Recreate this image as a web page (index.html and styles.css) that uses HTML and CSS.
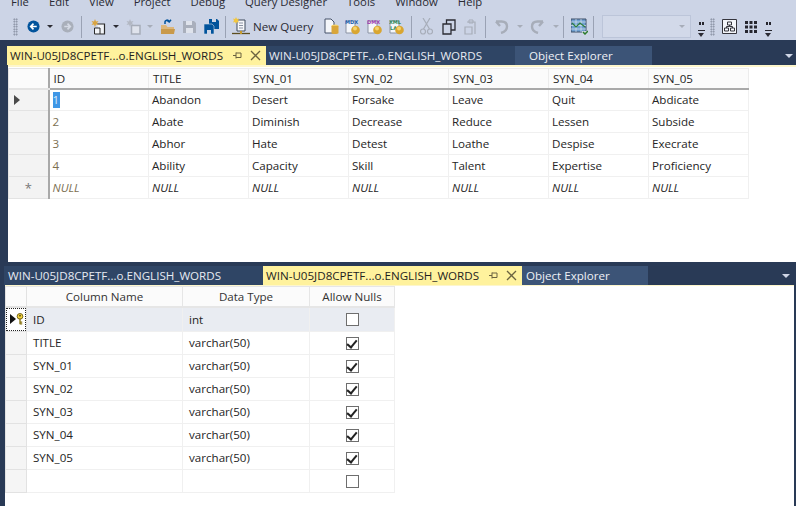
FILE: index.html
```html
<!DOCTYPE html>
<html lang="en">
<head>
<meta charset="utf-8">
<title>SSMS</title>
<link rel="stylesheet" href="styles.css">
</head>
<body>
<div class="app">
  <nav class="menu">
    <span class="mi m-file">File</span><span class="mi">Edit</span><span class="mi">View</span><span class="mi">Project</span><span class="mi">Debug</span><span class="mi">Query Designer</span><span class="mi">Tools</span><span class="mi">Window</span><span class="mi">Help</span>
  </nav>
  <div class="toolbar">
    <i class="grip g-a"></i>
    <svg class="i i-back" width="13" height="13" viewBox="0 0 14 14"><circle cx="7" cy="7" r="6.5" fill="#00539c"/><path d="M10.5 7H4.5M7 4L4 7l3 3" stroke="#fff" stroke-width="1.8" fill="none"/></svg>
    <i class="caret c-1"></i>
    <svg class="i i-fwd" width="13" height="13" viewBox="0 0 14 14"><circle cx="7" cy="7" r="6.5" fill="#a9afba"/><path d="M3.5 7H9.5M7 4l3 3-3 3" stroke="#d5dae5" stroke-width="1.8" fill="none"/></svg>
    <i class="sep s-1"></i>
    <svg class="i i-newp" width="15" height="16" viewBox="0 0 15 16"><path d="M6 5h7.500v10H9" fill="#f2f4f8" stroke="#2b2b2b" stroke-width="1.200"/><path d="M3.500 9v6H9V9z" fill="#f2f4f8" stroke="#2b2b2b"/><path d="M4 0l1 2.500L7.500 2 6 4l1.500 2L5 5.500 4 8 3 5.500.5 6 2 4 .5 2 3 2.500z" fill="#d9a441"/></svg>
    <i class="caret c-2"></i>
    <svg class="i i-add" width="15" height="16" viewBox="0 0 15 16"><path d="M5.500 6.500H14V15H5.500z" fill="#dfe3ec" stroke="#a7adb9" stroke-width="1.500"/><path d="M4 0l1 2.500L7.500 2 6 4l1.500 2L5 5.500 4 8 3 5.500.5 6 2 4 .5 2 3 2.500z" fill="#b3b8c3"/></svg>
    <i class="caret caret-off c-3"></i>
    <svg class="i i-open" width="15" height="16" viewBox="0 0 15 16"><path d="M1 6h5l1.500 2H14v7H1z" fill="#dcb67a"/><path d="M1 10h14l-1 5H1z" fill="#c99a4b"/><path d="M5 5V3.500A2 2 0 0 1 9 2.800M7 1.500l2.200 1.500L11 .800" stroke="#00539c" stroke-width="1.500" fill="none"/></svg>
    <svg class="i i-save" width="13" height="14" viewBox="0 0 13 14"><path d="M0 1h11l2 2v10H0z" fill="#a9afbc"/><path d="M3 1h6v4H3zM3 8h7v5H3z" fill="#dfe3ec"/></svg>
    <svg class="i i-saveall" width="15" height="15" viewBox="0 0 15 15"><path d="M5 0h8l2 2v8H5z" fill="#00539c"/><path d="M8 0h4v3H8z" fill="#cfd6e6"/><path d="M0 5h8l2 2v8H0z" fill="#00539c" stroke="#cfd6e6" stroke-width=".6"/><path d="M3 11h4v4H3z" fill="#cfd6e6"/></svg>
    <i class="sep s-2"></i>
    <svg class="i i-query" width="18" height="19" viewBox="0 0 18 19"><path d="M5 3h8v11H5z" fill="#f6f7fa" stroke="#3f4a5c"/><path d="M7 6h4M7 8.500h4M7 11h4" stroke="#8b93a3"/><path d="M4 0l1 2 2-.5L6 3.500l1 2-2-.5-1 2-1-2-2 .5 1-2-1-2 2 .5z" fill="#f2c63f"/><path d="M0 16.500h18" stroke="#5c4e1f" stroke-width="1.300"/><path d="M9 14v3" stroke="#c79b2d" stroke-width="2"/></svg>
    <span class="nq">New Query</span>
    <svg class="i i-db1" width="15" height="17" viewBox="0 0 15 17"><path d="M1 1h6l3 3v11H1z" fill="#f4f6fa" stroke="#47536a"/><ellipse cx="11" cy="8" rx="3.500" ry="1.500" fill="#f3cd62"/><path d="M7.500 8v7c0 1.400 7 1.400 7 0V8z" fill="#d9a63a"/></svg>
    <svg class="i i-db2" width="15" height="17" viewBox="0 0 15 17"><path d="M1 3h9v12H1z" fill="#f4f6fa" stroke="#8b93a3"/><text class="tiny t-blue" x="0" y="6">MDX</text><circle cx="10.500" cy="12" r="4.300" fill="#d9a631"/><circle cx="10" cy="10.500" r="2" fill="#f6d36c"/></svg>
    <svg class="i i-db3" width="15" height="17" viewBox="0 0 15 17"><path d="M1 3h9v12H1z" fill="#f4f6fa" stroke="#8b93a3"/><text class="tiny t-purple" x="0" y="6">DMX</text><circle cx="10.500" cy="12" r="4.300" fill="#d9a631"/><circle cx="10" cy="10.500" r="2" fill="#f6d36c"/></svg>
    <svg class="i i-db4" width="15" height="17" viewBox="0 0 15 17"><path d="M1 3h9v12H1z" fill="#f4f6fa" stroke="#8b93a3"/><text class="tiny t-green" x="0" y="6">XML</text><text class="tiny t-green" x="1" y="12">LA</text><circle cx="10.500" cy="12" r="4.300" fill="#d9a631"/><circle cx="10" cy="10.500" r="2" fill="#f6d36c"/></svg>
    <i class="sep s-3"></i>
    <svg class="i i-cut" width="13" height="17" viewBox="0 0 13 17"><path d="M3 0l6.500 11M10 0L3.500 11" stroke="#a7adb9" stroke-width="1.200" fill="none"/><circle cx="3" cy="13.500" r="2.500" fill="none" stroke="#a7adb9" stroke-width="1.200"/><circle cx="10" cy="13.500" r="2.500" fill="none" stroke="#a7adb9" stroke-width="1.200"/></svg>
    <svg class="i i-copy" width="14" height="16" viewBox="0 0 14 16"><path d="M4.500 5V1h8.500v10H9" fill="none" stroke="#2b2b33" stroke-width="1.300"/><path d="M1 5h8v10H1z" fill="none" stroke="#2b2b33" stroke-width="1.300"/></svg>
    <svg class="i i-paste" width="14" height="16" viewBox="0 0 14 16"><path d="M3 3h8v12" fill="none" stroke="#a7adb9" stroke-width="1.200"/><path d="M5 1h4v3H5z" fill="none" stroke="#a7adb9"/><path d="M1 8h7v7H1z" fill="none" stroke="#a7adb9" stroke-width="1.200"/></svg>
    <i class="sep s-4"></i>
    <svg class="i i-undo" width="14" height="15" viewBox="0 0 14 15"><path d="M1 2.500l4 4.500M1 2.500h5.500C10 2.500 12 4.500 12 7.500s-2.500 5.500-6 6.500" fill="none" stroke="#a7adb9" stroke-width="2.400"/></svg>
    <i class="caret caret-off c-4"></i>
    <svg class="i i-redo" width="14" height="15" viewBox="0 0 14 15"><path d="M13 2.500l-4 4.500M13 2.500H7.500C4 2.500 2 4.500 2 7.500s2.500 5.500 6 6.500" fill="none" stroke="#a7adb9" stroke-width="2.400"/></svg>
    <i class="caret caret-off c-5"></i>
    <i class="sep s-5"></i>
    <svg class="i i-chart" width="17" height="17" viewBox="0 0 17 17"><path d="M0 1h15v13H0z" fill="#6f9fd0" stroke="#3e4f66"/><path d="M0 4h15M0 7.500h15M0 11h15M5 1v13M10 1v13" stroke="#dbe6f2" stroke-width=".7"/><path d="M1 5l4 4 4-4 5 4" stroke="#2f7f3b" fill="none" stroke-width="1.200"/><path d="M11 13h6v4h-6z" fill="#cfd6e6"/><path d="M12 14l2 2 3-3" stroke="#2c7c2c" stroke-width="1.500" fill="none"/></svg>
    <i class="sep s-6"></i>
    <div class="combo"><i class="caret caret-off"></i></div>
    <div class="ov ov-1"><i class="dots"></i><i class="line"></i><i class="caret"></i></div>
    <i class="grip g-b"></i>
    <svg class="i i-tree" width="15" height="15" viewBox="0 0 15 15"><path d="M.5.500h14v14H.5z" fill="#f4f6fa" stroke="#35353d"/><path d="M5.500 3h4v3h-4zM2.500 9h4v3h-4zM8.500 9h4v3h-4z" fill="none" stroke="#35353d"/><path d="M7.500 6v1.500h-3V9M7.500 7.500h3V9" fill="none" stroke="#35353d"/></svg>
    <svg class="i i-grid" width="12" height="12" viewBox="0 0 12 12"><path d="M0 0h3v3H0zM4.500 0h3v3h-3zM9 0h3v3H9zM0 4.500h3v3H0zM4.500 4.500h3v3h-3zM9 4.500h3v3H9zM0 9h3v3H0zM4.500 9h3v3h-3zM9 9h3v3H9z" fill="#26262e"/></svg>
    <div class="ov ov-2"><i class="dots"></i><i class="line"></i><i class="caret"></i></div>
  </div>

  <section class="pane pane-top">
    <div class="tabs tabs-top">
      <div class="tab active t1"><span>WIN-U05JD8CPETF...o.ENGLISH_WORDS</span>
        <svg class="pin" width="9" height="9" viewBox="0 0 9 9"><path d="M0 4.500h3M3 1.500v6M3 2h5v4.500H3" fill="none" stroke="#6b6340"/></svg>
        <svg class="close" width="11" height="11" viewBox="0 0 11 11"><path d="M1 1l9 9M10 1l-9 9" stroke="#6b6340" stroke-width="1.300"/></svg>
      </div>
      <div class="tab inactive t2">WIN-U05JD8CPETF...o.ENGLISH_WORDS</div>
      <div class="tab explorer t3">Object Explorer</div>
      <i class="caret light drop"></i>
    </div>
    <div class="body body-top">
      <table class="data">
        <thead><tr><th class="rh"></th><th>ID</th><th>TITLE</th><th>SYN_01</th><th>SYN_02</th><th>SYN_03</th><th>SYN_04</th><th>SYN_05</th></tr></thead>
        <tbody>
          <tr><td class="rh"><i class="arrow"></i></td><td class="idc"><span class="sel">1</span></td><td>Abandon</td><td>Desert</td><td>Forsake</td><td>Leave</td><td>Quit</td><td>Abdicate</td></tr>
          <tr><td class="rh"></td><td class="idc">2</td><td>Abate</td><td>Diminish</td><td>Decrease</td><td>Reduce</td><td>Lessen</td><td>Subside</td></tr>
          <tr><td class="rh"></td><td class="idc">3</td><td>Abhor</td><td>Hate</td><td>Detest</td><td>Loathe</td><td>Despise</td><td>Execrate</td></tr>
          <tr><td class="rh"></td><td class="idc">4</td><td>Ability</td><td>Capacity</td><td>Skill</td><td>Talent</td><td>Expertise</td><td>Proficiency</td></tr>
          <tr class="nulls"><td class="rh star">*</td><td class="idc">NULL</td><td>NULL</td><td>NULL</td><td>NULL</td><td>NULL</td><td>NULL</td><td>NULL</td></tr>
        </tbody>
      </table>
    </div>
  </section>

  <section class="pane pane-bottom">
    <div class="tabs tabs-bottom">
      <div class="tab inactive b1">WIN-U05JD8CPETF...o.ENGLISH_WORDS</div>
      <div class="tab active b2"><span>WIN-U05JD8CPETF...o.ENGLISH_WORDS</span>
        <svg class="pin" width="9" height="9" viewBox="0 0 9 9"><path d="M0 4.500h3M3 1.500v6M3 2h5v4.500H3" fill="none" stroke="#6b6340"/></svg>
        <svg class="close" width="11" height="11" viewBox="0 0 11 11"><path d="M1 1l9 9M10 1l-9 9" stroke="#6b6340" stroke-width="1.300"/></svg>
      </div>
      <div class="tab explorer b3">Object Explorer</div>
      <i class="caret light drop"></i>
    </div>
    <div class="body body-bottom">
      <table class="design">
        <thead><tr><th class="rh"></th><th class="cn">Column Name</th><th class="dt">Data Type</th><th class="an">Allow Nulls</th></tr></thead>
        <tbody>
          <tr class="current"><td class="rh keycell"><div class="focus"><i class="arrow dark"></i><svg class="key" width="8" height="14" viewBox="0 0 9 13"><circle cx="4.500" cy="3.500" r="3.200" fill="#f3d23c" stroke="#6a5a10"/><path d="M4.500 6v6.500M4.500 10H7M4.500 12H7" stroke="#8a7515" stroke-width="1.500"/><circle cx="4.500" cy="2.800" r="1" fill="#4d4411"/></svg></div></td><td>ID</td><td>int</td><td class="chk"><i class="box"></i></td></tr>
          <tr><td class="rh"></td><td>TITLE</td><td>varchar(50)</td><td class="chk"><i class="box on"></i></td></tr>
          <tr><td class="rh"></td><td>SYN_01</td><td>varchar(50)</td><td class="chk"><i class="box on"></i></td></tr>
          <tr><td class="rh"></td><td>SYN_02</td><td>varchar(50)</td><td class="chk"><i class="box on"></i></td></tr>
          <tr><td class="rh"></td><td>SYN_03</td><td>varchar(50)</td><td class="chk"><i class="box on"></i></td></tr>
          <tr><td class="rh"></td><td>SYN_04</td><td>varchar(50)</td><td class="chk"><i class="box on"></i></td></tr>
          <tr><td class="rh"></td><td>SYN_05</td><td>varchar(50)</td><td class="chk"><i class="box on"></i></td></tr>
          <tr><td class="rh"></td><td></td><td></td><td class="chk"><i class="box"></i></td></tr>
        </tbody>
      </table>
    </div>
  </section>
</div>
</body>
</html>
```

FILE: styles.css
```css
* { box-sizing: border-box; }
html, body { margin: 0; height: 100%; overflow: hidden; }
body { font-family: "Open Sans", "Noto Sans", sans-serif; font-size: 11.6px; color: #1e1e1e; background: #293a56; }
i { display: block; font-style: normal; }
.app { width: 796px; height: 506px; display: flex; flex-direction: column; overflow: hidden; }

/* menu */
.menu { height: 13px; flex: none; background: #ccd4e6; display: flex; gap: 20px; overflow: hidden; align-items: flex-end; padding-bottom: 3px; font-size: 11.3px; color: #2a2a33; }
.mi { line-height: 16px; flex: none; }
.m-file { margin-left: 11px; }

/* toolbar */
.toolbar { height: 27px; flex: none; background: #ccd4e6; display: flex; align-items: center; }
.i { display: block; flex: none; }
.grip { width: 5px; height: 18px; flex: none; background-image: radial-gradient(circle, #7c8496 .7px, transparent 1px); background-size: 2.500px 2.500px; }
.g-a { margin-left: 13px; }
.g-b { margin-left: 5px; }
.caret { width: 0; height: 0; flex: none; border-left: 3px solid transparent; border-right: 3px solid transparent; border-top: 3px solid #2b2b33; }
.caret-off { border-top-color: #a7adb9; }
.caret.light { border-top-color: #cfd6e6; }
.sep { width: 1px; height: 22px; flex: none; background: #9aa2b4; }
.i-back { margin-left: 9px; }
.c-1 { margin-left: 7px; }
.i-fwd { margin-left: 8px; }
.s-1 { margin-left: 7px; }
.i-newp { margin-left: 9px; }
.c-2 { margin-left: 7px; }
.i-add { margin-left: 7px; }
.c-3 { margin-left: 6px; }
.i-open { margin-left: 7px; }
.i-save { margin-left: 8px; }
.i-saveall { margin-left: 8px; }
.s-2 { margin-left: 6px; }
.i-query { margin-left: 6px; }
.nq { margin-left: 3px; width: 60px; flex: none; white-space: nowrap; color: #2a2a33; }
.i-db1 { margin-left: 11px; }
.i-db2 { margin-left: 6px; }
.i-db3, .i-db4 { margin-left: 7px; }
.s-3 { margin-left: 7px; }
.i-cut { margin-left: 8px; }
.i-copy { margin-left: 9px; }
.i-paste { margin-left: 8px; }
.s-4 { margin-left: 7px; }
.i-undo { margin-left: 9px; }
.c-4 { margin-left: 8px; }
.i-redo { margin-left: 7px; }
.c-5 { margin-left: 9px; }
.s-5 { margin-left: 4px; }
.i-chart { margin-left: 7px; }
.s-6 { margin-left: 5px; }
.combo { width: 89px; height: 23px; margin-left: 8px; flex: none; background: #d2d9e9; border: 1px solid #bcc5d9; display: flex; align-items: center; justify-content: flex-end; padding-right: 5px; }
.ov { width: 8px; height: 20px; flex: none; display: flex; flex-direction: column; align-items: center; justify-content: flex-end; }
.ov-1 { margin-left: 6px; }
.ov-2 { margin-left: 7px; }
.dots { width: 5px; height: 3px; margin-bottom: 5px; background: linear-gradient(90deg, #26262e 2px, transparent 2px, transparent 3px, #26262e 3px); }
.line { width: 7px; height: 1px; background: #26262e; margin-bottom: 2px; }
.ov .caret { border-left-width: 3.500px; border-right-width: 3.500px; border-top-width: 4px; }
.i-tree { margin-left: 7px; }
.i-grid { margin-left: 8px; }
.tiny { font-family: "DejaVu Sans", sans-serif; font-size: 5px; font-weight: 700; }
.t-blue { fill: #1d5fae; }
.t-purple { fill: #a03eb0; }
.t-green { fill: #2c8a5c; }

/* panes */
.pane { display: flex; flex-direction: column; flex: none; }
.pane-top { padding-top: 6px; }
.pane-bottom { flex: 1; min-height: 0; padding-top: 4px; }
.tabs { display: flex; height: 19px; flex: none; position: relative; }
.tabs-top { margin-left: 7px; }
.tabs-bottom { margin-left: 4px; }
.tab { display: flex; align-items: center; height: 19px; flex: none; white-space: nowrap; }
.active { background: #fff29d; color: #1e1e1e; }
.inactive { background: #2f4565; color: #e6eaf2; }
.explorer { background: #3c5477; color: #eef1f6; }
.t1, .b2 { width: 259px; padding-left: 3px; }
.t2 { width: 249px; padding-left: 3px; }
.t3 { width: 137px; padding-left: 14px; }
.b1 { width: 259px; padding-left: 4px; }
.b3 { width: 126px; padding-left: 4px; }
.pin { margin-left: 10px; flex: none; }
.close { margin-left: 8px; flex: none; }
.drop { position: absolute; top: 8px; right: 3px; border-left-width: 4px; border-right-width: 4px; border-top-width: 4px; }
.tabs-bottom .drop { right: 6px; }
.body { background: #fff; }
.body-top { height: 197px; margin-left: 8px; border-top: 2px solid #fdf6cc; }
.body-bottom { flex: 1; min-height: 0; margin: 0 2px 0 5px; border-top: 1px solid #fdf6cc; }

/* tables */
table { border-collapse: collapse; table-layout: fixed; font-size: 11.6px; }
.data { width: 740px; margin-top: 1px; }
.data th, .data td { width: 100px; height: 22px; padding: 0 0 0 3px; text-align: left; font-weight: 400; border: 1px solid #f0f0f0; white-space: nowrap; overflow: hidden; color: #252525; }
.data th { height: 20px; background: #fbfbfb; padding-left: 4px; border-color: #ececec; border-bottom: 2px solid #a9a9a9; }
.data .rh { width: 40px; background: #f3f3f3; padding: 0; border-color: #e3e3e3; border-right: 2px solid #a9a9a9; }
.data th.rh { background: #fbfbfb; }
.data .idc { color: #7c6f52; }
.sel { display: inline-block; width: 7px; height: 16px; line-height: 16px; background: #3f97e6; color: #dbeafb; }
.nulls td { font-style: italic; }
.nulls .rh { font-style: normal; }
.data .star { text-align: center; color: #777; font-size: 13px; }
.arrow { width: 0; height: 0; margin-left: 5px; border-top: 5px solid transparent; border-bottom: 5px solid transparent; border-left: 6px solid #4a4a4a; }

.design { width: 389px; }
.design th, .design td { height: 23px; padding: 0 0 0 6px; font-weight: 400; border: 1px solid #f0f0f0; overflow: hidden; white-space: nowrap; color: #252525; }
.design th { height: 20px; background: #fbfbfb; text-align: center; padding: 0; border: 1px solid #e6e6e6; border-bottom: 2px solid #e6e6e6; color: #333; }
.design .rh { width: 21px; padding: 0; background: #f5f5f5; border-color: #e2e2e2; }
.design th.rh { background: #fbfbfb; }
.cn { width: 156px; }
.dt { width: 127px; }
.an { width: 85px; }
.current td { background: #e9ecf2; }
.design .keycell { background: #fff; }
.focus { height: 23px; display: flex; align-items: center; border: 1px dotted #222; padding-left: 3px; }
.key { flex: none; }
.arrow.dark { margin-left: 0; flex: none; border-left-color: #111; }
.design td.chk { padding: 0; text-align: center; }
.box { width: 13px; height: 13px; margin: 1px auto 0; border: 1px solid #6e6e6e; background: #fff; position: relative; }
.box.on::after { content: ""; position: absolute; left: 2.500px; top: 0; width: 4px; height: 8px; border-right: 2px solid #222; border-bottom: 2px solid #222; transform: rotate(40deg); }
```
